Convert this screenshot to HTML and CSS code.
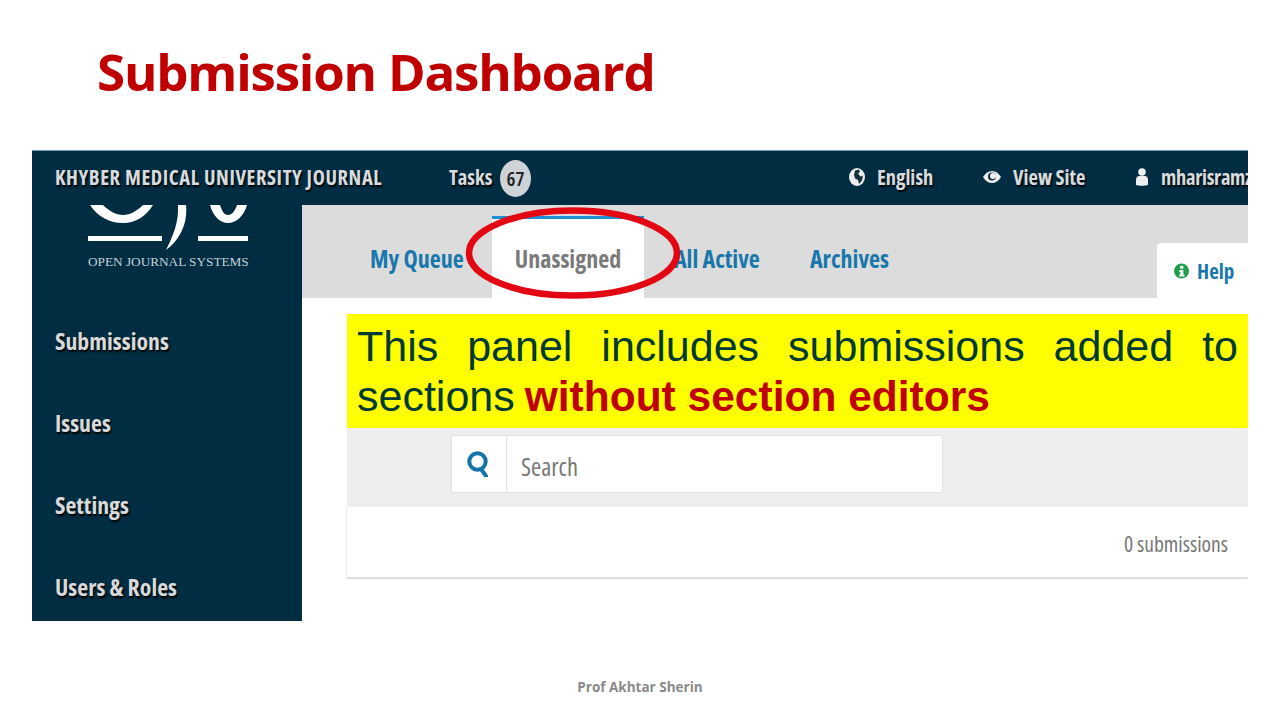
FILE: index.html
```html
<!DOCTYPE html>
<html lang="en">
<head>
    <meta charset="UTF-8">
    <meta name="viewport" content="width=device-width, initial-scale=1.0">
    <title>Submission Dashboard</title>
    <link rel="stylesheet" href="styles.css">
</head>
<body>
    <h1 class="slide-title">Submission Dashboard</h1>

    <div class="shot">
        <div class="topbar">
            <span class="journal">KHYBER MEDICAL UNIVERSITY JOURNAL</span>
            <span class="tasks">Tasks</span>
            <span class="badge">67</span>
            <div class="topbar-right">
                <svg class="ico-globe" viewBox="0 0 16 18"><ellipse cx="8" cy="9" rx="8" ry="9" fill="#eee"/><path d="M6 2.500l4-1 1 2.500-2 1.500 2.500 3 2.500-1-1 5-3 3.500-1-4-3-1.500-1-3.500z" fill="#12303f"/></svg>
                <span class="top-link link-english">English</span>
                <svg class="ico-eye" viewBox="0 0 18 12"><path d="M0 6c2.500-4 5.500-6 9-6s6.500 2 9 6c-2.500 4-5.500 6-9 6s-6.500-2-9-6z" fill="#eee"/><circle cx="9" cy="5.500" r="4" fill="#12303f"/><circle cx="10" cy="5" r="3" fill="#eee"/></svg>
                <span class="top-link link-site">View Site</span>
                <svg class="ico-user" viewBox="0 0 12 18"><circle cx="6" cy="4" r="3.800" fill="#eee"/><path d="M0 17v-5c0-2.500 1.500-4 3-4h6c1.500 0 3 1.500 3 4v5c-3 1-9 1-12 0z" fill="#eee"/></svg>
                <span class="top-link link-user">mharisramzan</span>
            </div>
        </div>

        <div class="body-row">
            <aside class="sidebar">
                <div class="logo">
                    <svg class="logo-mark" viewBox="0 0 160 45">
                        <path d="M2 0C10 12 22 18 35 18S58 11 65 0H55C49 6 42 10 35 10S21 6 15 0z" fill="#fff"/>
                        <path d="M90 0h8c2 18-6 35-20 45 7-14 13-28 12-45z" fill="#fff"/>
                        <path d="M122 0c3 11 10 18 18 18s16-7 19-18h-10c-2 6-5 10-9 10s-6-4-8-10z" fill="#fff"/>
                        <rect x="0" y="31" width="74" height="5" fill="#fff"/>
                        <rect x="110" y="31" width="50" height="5" fill="#fff"/>
                    </svg>
                    <div class="logo-text">OPEN JOURNAL SYSTEMS</div>
                </div>
                <nav class="side-nav">
                    <a href="#">Submissions</a>
                    <a href="#">Issues</a>
                    <a href="#">Settings</a>
                    <a href="#">Users &amp; Roles</a>
                </nav>
            </aside>

            <main class="main">
                <div class="tabs">
                    <a class="tab tab-queue" href="#">My Queue</a>
                    <a class="tab tab-current" href="#">Unassigned</a>
                    <a class="tab tab-active" href="#">All Active</a>
                    <a class="tab tab-archives" href="#">Archives</a>
                    <a class="help" href="#">
                        <svg class="ico-info" viewBox="0 0 16 16"><circle cx="8" cy="8" r="8" fill="#1e9e4a"/><rect x="6.500" y="2.500" width="3.500" height="3" fill="#fff"/><path d="M5.500 7h4.500v5h1.200v1.800H5.500V12h1.200V8.800H5.500z" fill="#fff"/></svg>
                        <span>Help</span>
                    </a>
                </div>

                <div class="panel">
                    <p class="note">This panel includes submissions added to sections <strong>without section editors</strong></p>
                    <div class="search-bar">
                        <div class="search-box">
                            <div class="search-icon">
                                <svg class="ico-search" viewBox="0 0 22 26"><circle cx="10.500" cy="10.500" r="8.200" fill="none" stroke="#1474a8" stroke-width="4"/><path d="M14 18l5 7" stroke="#1474a8" stroke-width="4" stroke-linecap="round"/></svg>
                            </div>
                            <span class="search-text">Search</span>
                        </div>
                    </div>
                    <div class="count-row">0 submissions</div>
                </div>
            </main>
        </div>

        <svg class="ring" viewBox="0 0 216 94"><ellipse cx="108" cy="47" rx="104" ry="42.500" fill="none" stroke="#e30613" stroke-width="6.500"/></svg>
    </div>

    <footer class="slide-footer">Prof Akhtar Sherin</footer>
</body>
</html>
```

FILE: styles.css
```css
* {
    margin: 0;
    padding: 0;
    box-sizing: border-box;
}

body {
    width: 1280px;
    height: 720px;
    overflow: hidden;
    background: #fff;
    font-family: 'Open Sans', sans-serif;
}

a {
    text-decoration: none;
}

.slide-title {
    height: 150px;
    padding: 39px 0 0 97px;
    font-size: 51px;
    line-height: 64px;
    font-weight: 700;
    letter-spacing: -1.2px;
    color: #c00000;
    white-space: nowrap;
}

.shot {
    position: relative;
    width: 1216px;
    height: 471px;
    margin-left: 32px;
    overflow: hidden;
}

/* top bar */
.topbar {
    display: flex;
    align-items: center;
    height: 55px;
    padding: 0 0 2px 23px;
    background: #012d42;
    color: #d8dbde;
    font-size: 20.500px;
    font-weight: 700;
    font-stretch: 75%;
    text-shadow: 1px 2px 2px #000;
    white-space: nowrap;
    border-top: 1px solid #6d97ad;
}

.topbar > * {
    flex-shrink: 0;
}

.journal {
    width: 394px;
    letter-spacing: 0.6px;
}

.tasks {
    width: 51px;
}

.badge {
    width: 31px;
    height: 37px;
    margin-top: 2px;
    border-radius: 50%;
    background: #ced3d7;
    color: #222;
    font-size: 20px;
    font-weight: 600;
    line-height: 37px;
    text-align: center;
    text-shadow: none;
}

.topbar-right {
    display: flex;
    align-items: center;
    margin-left: 318px;
}

.topbar-right > * {
    flex-shrink: 0;
}

.ico-globe {
    width: 16px;
    height: 18px;
    margin-right: 12px;
}

.ico-eye {
    width: 18px;
    height: 12px;
    margin-right: 12px;
}

.ico-user {
    width: 12px;
    height: 18px;
    margin-right: 13px;
}

.link-english {
    width: 106px;
}

.link-site {
    width: 123px;
}

.link-user {
    letter-spacing: -0.3px;
}

/* sidebar and main */
.body-row {
    display: flex;
    height: 416px;
}

.sidebar {
    width: 270px;
    flex-shrink: 0;
    background: #012d42;
    overflow: hidden;
}

.logo {
    height: 70px;
    padding-left: 56px;
}

.logo-mark {
    display: block;
    width: 160px;
    height: 45px;
}

.logo-text {
    width: 160px;
    margin-top: 3px;
    font-family: 'Liberation Serif', serif;
    font-size: 13.250px;
    line-height: 18px;
    color: #c3d0d8;
    white-space: nowrap;
}

.side-nav {
    display: flex;
    flex-direction: column;
    gap: 50px;
    padding: 50px 0 0 23px;
}

.side-nav a {
    height: 32px;
    font-size: 23.800px;
    line-height: 32px;
    font-weight: 700;
    font-stretch: 75%;
    color: #d9d9d9;
    text-shadow: 1px 2px 2px #000;
}

.main {
    flex: 1;
    min-width: 0;
}

.tabs {
    display: flex;
    align-items: flex-end;
    height: 93px;
    background: #dcdcdc;
    font-size: 24px;
    font-weight: 700;
    font-stretch: 75%;
    white-space: nowrap;
}

.tab {
    height: 82px;
    line-height: 86px;
    color: #1877ab;
}

.tab-queue {
    width: 190px;
    padding-left: 68px;
}

.tab-current {
    width: 152px;
    border-top: 3px solid #1e8fd5;
    line-height: 80px;
    text-align: center;
    background: #fff;
    color: #7a7a7a;
}

.tab-active {
    width: 166px;
    padding-left: 30px;
}

.tab-archives {
    width: 347px;
}

.help {
    display: flex;
    align-items: center;
    width: 91px;
    height: 55px;
    padding-left: 17px;
    background: #fff;
    border-radius: 4px 0 0 0;
    color: #1877ab;
    font-size: 21px;
}

.ico-info {
    width: 15px;
    height: 16px;
    margin-right: 8px;
}

/* panel */
.panel {
    padding: 16px 0 0 45px;
}

.note {
    height: 114px;
    padding: 7px 10px 0 10px;
    background: #ff0;
    color: #013a35;
    font-family: 'Liberation Sans', sans-serif;
    font-size: 43px;
    line-height: 50px;
    text-align: justify;
}

.note strong {
    margin-left: -2px;
    font-size: 42.500px;
    color: #c00000;
}

.search-bar {
    height: 79px;
    padding: 7px 0 0 104px;
    background: #eee;
}

.search-box {
    display: flex;
    align-items: center;
    width: 492px;
    height: 58px;
    background: #fff;
    border: 1px solid #e2e2e2;
    border-radius: 3px;
}

.search-icon {
    display: flex;
    align-items: center;
    justify-content: center;
    width: 55px;
    height: 100%;
    padding-right: 2px;
    border-right: 1px solid #e2e2e2;
}

.ico-search {
    width: 22px;
    height: 26px;
}

.search-text {
    padding: 4px 0 0 14px;
    font-size: 24.500px;
    font-stretch: 75%;
    color: #777;
}

.count-row {
    height: 72px;
    padding-right: 20px;
    background: #fff;
    border-bottom: 2px solid #ddd;
    box-shadow: -1px 0 1px #eee;
    font-size: 21.500px;
    font-stretch: 75%;
    line-height: 74px;
    text-align: right;
    color: #777;
}

/* red marker drawn over the tabs */
.ring {
    position: absolute;
    left: 433px;
    top: 56px;
    width: 216px;
    height: 94px;
}

.slide-footer {
    padding-top: 57px;
    font-size: 13.500px;
    line-height: 18px;
    font-weight: 700;
    text-align: center;
    color: #898989;
}
```
